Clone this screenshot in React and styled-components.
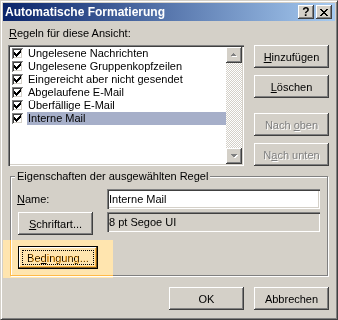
import React from 'react';
import styled, { createGlobalStyle } from 'styled-components';

const face = '#d4d0c8';

const Global = createGlobalStyle`
  html, body { margin: 0; padding: 0; background: ${face}; }
  body {
    font-family: "Liberation Sans", Arial, sans-serif;
    font-size: 11px;
    color: #000;
  }
`;

const Window = styled.div`
  position: relative;
  box-sizing: border-box;
  width: 338px;
  height: 320px;
  padding: 2px;
  background: ${face};
  border: 1px solid;
  border-color: ${face} #404040 #404040 ${face};
  box-shadow: inset 1px 1px #fff, inset -1px -1px #808080;
  display: flex;
  flex-direction: column;
`;

const TitleBar = styled.div`
  height: 18px;
  flex: none;
  display: flex;
  align-items: center;
  padding: 0 3px 0 2px;
  background: linear-gradient(to right, #0a246a, #a6caf0);
  color: #fff;
  font-weight: bold;
  font-size: 12px;
`;

const Title = styled.span`
  flex: 1;
  white-space: nowrap;
`;

const CaptionButton = styled.div`
  box-sizing: border-box;
  width: 16px;
  height: 14px;
  margin-left: ${p => p.$gap || 0}px;
  background: ${face};
  box-shadow: inset -1px -1px #404040, inset 1px 1px #fff, inset -2px -2px #808080;
  color: #000;
  font-size: 12px;
  font-weight: bold;
  display: flex;
  align-items: center;
  justify-content: center;
  line-height: 14px;
`;

const Body = styled.div`
  flex: 1;
  padding: 6px 6px 0 5px;
  display: flex;
  flex-direction: column;
`;

const Caption = styled.div`
  margin-left: 1px;
  height: 12px;
  line-height: 12px;
`;

const U = styled.span`
  text-decoration: underline;
`;

const TopRow = styled.div`
  margin-top: 6px;
  display: flex;
  gap: 10px;
`;

const ListBox = styled.div`
  box-sizing: border-box;
  width: 237px;
  height: 121px;
  padding: 2px;
  background: #fff;
  box-shadow: inset 1px 1px #808080, inset 2px 2px #404040, inset -1px -1px #fff, inset -2px -2px ${face};
  display: flex;
`;

const Items = styled.div`
  flex: 1;
  display: flex;
  flex-direction: column;
`;

const Item = styled.div`
  height: 13px;
  display: flex;
  align-items: center;
  padding-left: 2px;
`;

const ItemText = styled.span`
  flex: 1;
  margin-left: 4px;
  padding-left: 1px;
  line-height: 13px;
  white-space: nowrap;
  background: ${p => (p.$selected ? '#a6afc9' : 'transparent')};
`;

const ScrollBar = styled.div`
  width: 16px;
  display: flex;
  flex-direction: column;
  background: repeating-conic-gradient(#fff 0 25%, ${face} 0 50%) 0 0 / 2px 2px;
`;

const ScrollArrow = styled.div`
  box-sizing: border-box;
  width: 16px;
  height: 16px;
  background: ${face};
  box-shadow: inset -1px -1px #404040, inset 1px 1px #fff, inset -2px -2px #808080;
  display: flex;
  align-items: center;
  justify-content: center;
  margin-top: ${p => (p.$bottom ? 'auto' : '0')};
`;

const ButtonColumn = styled.div`
  display: flex;
  flex-direction: column;
`;

const Button = styled.div`
  position: relative;
  box-sizing: border-box;
  width: ${p => p.$w || 75}px;
  height: 23px;
  flex: none;
  margin-top: ${p => p.$mt || 0}px;
  background: ${face};
  box-shadow: ${p =>
    p.$focused
      ? `inset 0 0 0 1px #000, inset -2px -2px #404040, inset 2px 2px #fff, inset -3px -3px #808080`
      : `inset -1px -1px #404040, inset 1px 1px #fff, inset -2px -2px #808080`};
  display: flex;
  align-items: center;
  justify-content: center;
  white-space: nowrap;
  color: ${p => (p.$disabled ? '#808080' : '#000')};
  text-shadow: ${p => (p.$disabled ? '1px 1px #fff' : 'none')};

  &::after {
    content: '';
    display: ${p => (p.$focused ? 'block' : 'none')};
    position: absolute;
    inset: 4px;
    border: 1px dotted #000;
  }
`;

const Group = styled.div`
  position: relative;
  box-sizing: border-box;
  width: 318px;
  height: 100px;
  margin: 10px 0 0 2px;
  padding: 12px 7px 5px 7px;
  border: 1px solid #808080;
  box-shadow: inset 1px 1px #fff, 1px 1px #fff;
  display: flex;
  flex-direction: column;
`;

const GroupLabel = styled.span`
  position: absolute;
  top: -7px;
  left: 4px;
  padding: 0 2px;
  line-height: 13px;
  background: ${face};
`;

const FieldRow = styled.div`
  display: flex;
  align-items: center;
  margin-bottom: ${p => p.$mb || 0}px;
`;

const FieldLabel = styled.span`
  width: 89px;
  margin-left: -1px;
  padding-right: 1px;
`;

const ButtonSlot = styled.div`
  width: 89px;
`;

const TextField = styled.div`
  box-sizing: border-box;
  width: 213px;
  height: 20px;
  padding-left: 2px;
  display: flex;
  align-items: center;
  background: ${p => (p.$readOnly ? face : '#fff')};
  box-shadow: inset 1px 1px #808080, inset 2px 2px #404040, inset -1px -1px #fff, inset -2px -2px ${face};
  align-self: flex-start;
`;

const BottomRow = styled.div`
  margin-top: 11px;
  display: flex;
  justify-content: flex-end;
  gap: 10px;
`;

const Highlight = styled.div`
  position: absolute;
  left: 2px;
  top: 239px;
  width: 110px;
  height: 38px;
  background: rgb(255, 186, 71);
  mix-blend-mode: overlay;
  pointer-events: none;
`;

const checkTops = [2, 3, 4, 3, 2, 1, 0];

function CheckBox() {
  return (
    <svg width="11" height="11" viewBox="0 0 11 11" shapeRendering="crispEdges">
      <rect x="0" y="0" width="11" height="11" fill="#808080" />
      <rect x="1" y="1" width="10" height="10" fill="#fff" />
      <rect x="1" y="1" width="9" height="9" fill="#404040" />
      <rect x="2" y="2" width="8" height="8" fill={face} />
      <rect x="2" y="2" width="7" height="7" fill="#fff" />
      {checkTops.map((t, i) => (
        <rect key={i} x={2 + i} y={2 + t} width="1" height="3" fill="#000" />
      ))}
    </svg>
  );
}

function Arrow({ down }) {
  const up = '3,0 0,3 7,3';
  const dn = '0,0 7,0 3.5,3.5';
  return (
    <svg width="8" height="5" viewBox="0 0 8 5" shapeRendering="crispEdges">
      <polygon points={down ? dn : up} fill="#fff" transform="translate(1,1)" />
      <polygon points={down ? dn : up} fill="#808080" />
    </svg>
  );
}

const closeGlyph = [
  'XX....XX',
  '.XX..XX.',
  '..XXXX..',
  '...XX...',
  '..XXXX..',
  '.XX..XX.',
  'XX....XX',
];

function CloseIcon() {
  return (
    <svg width="8" height="7" viewBox="0 0 8 7" shapeRendering="crispEdges">
      {closeGlyph.flatMap((row, y) =>
        row.split('').map((c, x) =>
          c === 'X' ? <rect key={`${x}-${y}`} x={x} y={y} width="1" height="1" fill="#000" /> : null
        )
      )}
    </svg>
  );
}

const rules = [
  'Ungelesene Nachrichten',
  'Ungelesene Gruppenkopfzeilen',
  'Eingereicht aber nicht gesendet',
  'Abgelaufene E-Mail',
  'Überfällige E-Mail',
  'Interne Mail',
];

export default function App() {
  return (
    <>
      <Global />
      <Window>
        <TitleBar>
          <Title>Automatische Formatierung</Title>
          <CaptionButton>?</CaptionButton>
          <CaptionButton $gap={2}>
            <CloseIcon />
          </CaptionButton>
        </TitleBar>
        <Body>
          <Caption>
            <U>R</U>egeln für diese Ansicht:
          </Caption>
          <TopRow>
            <ListBox>
              <Items>
                {rules.map((r, i) => (
                  <Item key={r}>
                    <CheckBox />
                    <ItemText $selected={i === rules.length - 1}>{r}</ItemText>
                  </Item>
                ))}
              </Items>
              <ScrollBar>
                <ScrollArrow>
                  <Arrow />
                </ScrollArrow>
                <ScrollArrow $bottom>
                  <Arrow down />
                </ScrollArrow>
              </ScrollBar>
            </ListBox>
            <ButtonColumn>
              <Button>
                <U>H</U>inzufügen
              </Button>
              <Button $mt={7}>
                <U>L</U>öschen
              </Button>
              <Button $mt={15} $disabled>
                Nach&nbsp;<U>o</U>ben
              </Button>
              <Button $mt={7} $disabled>
                N<U>a</U>ch unten
              </Button>
            </ButtonColumn>
          </TopRow>
          <Group>
            <GroupLabel>Eigenschaften der ausgewählten Regel</GroupLabel>
            <FieldRow $mb={3}>
              <FieldLabel>
                <U>N</U>ame:
              </FieldLabel>
              <TextField>Interne Mail</TextField>
            </FieldRow>
            <FieldRow $mb={11}>
              <ButtonSlot>
                <Button>
                  <U>S</U>chriftart...
                </Button>
              </ButtonSlot>
              <TextField $readOnly>8 pt Segoe UI</TextField>
            </FieldRow>
            <Button $w={80} $focused>
              Be<U>d</U>ingung...
            </Button>
          </Group>
          <BottomRow>
            <Button>OK</Button>
            <Button>Abbrechen</Button>
          </BottomRow>
        </Body>
        <Highlight />
      </Window>
    </>
  );
}
